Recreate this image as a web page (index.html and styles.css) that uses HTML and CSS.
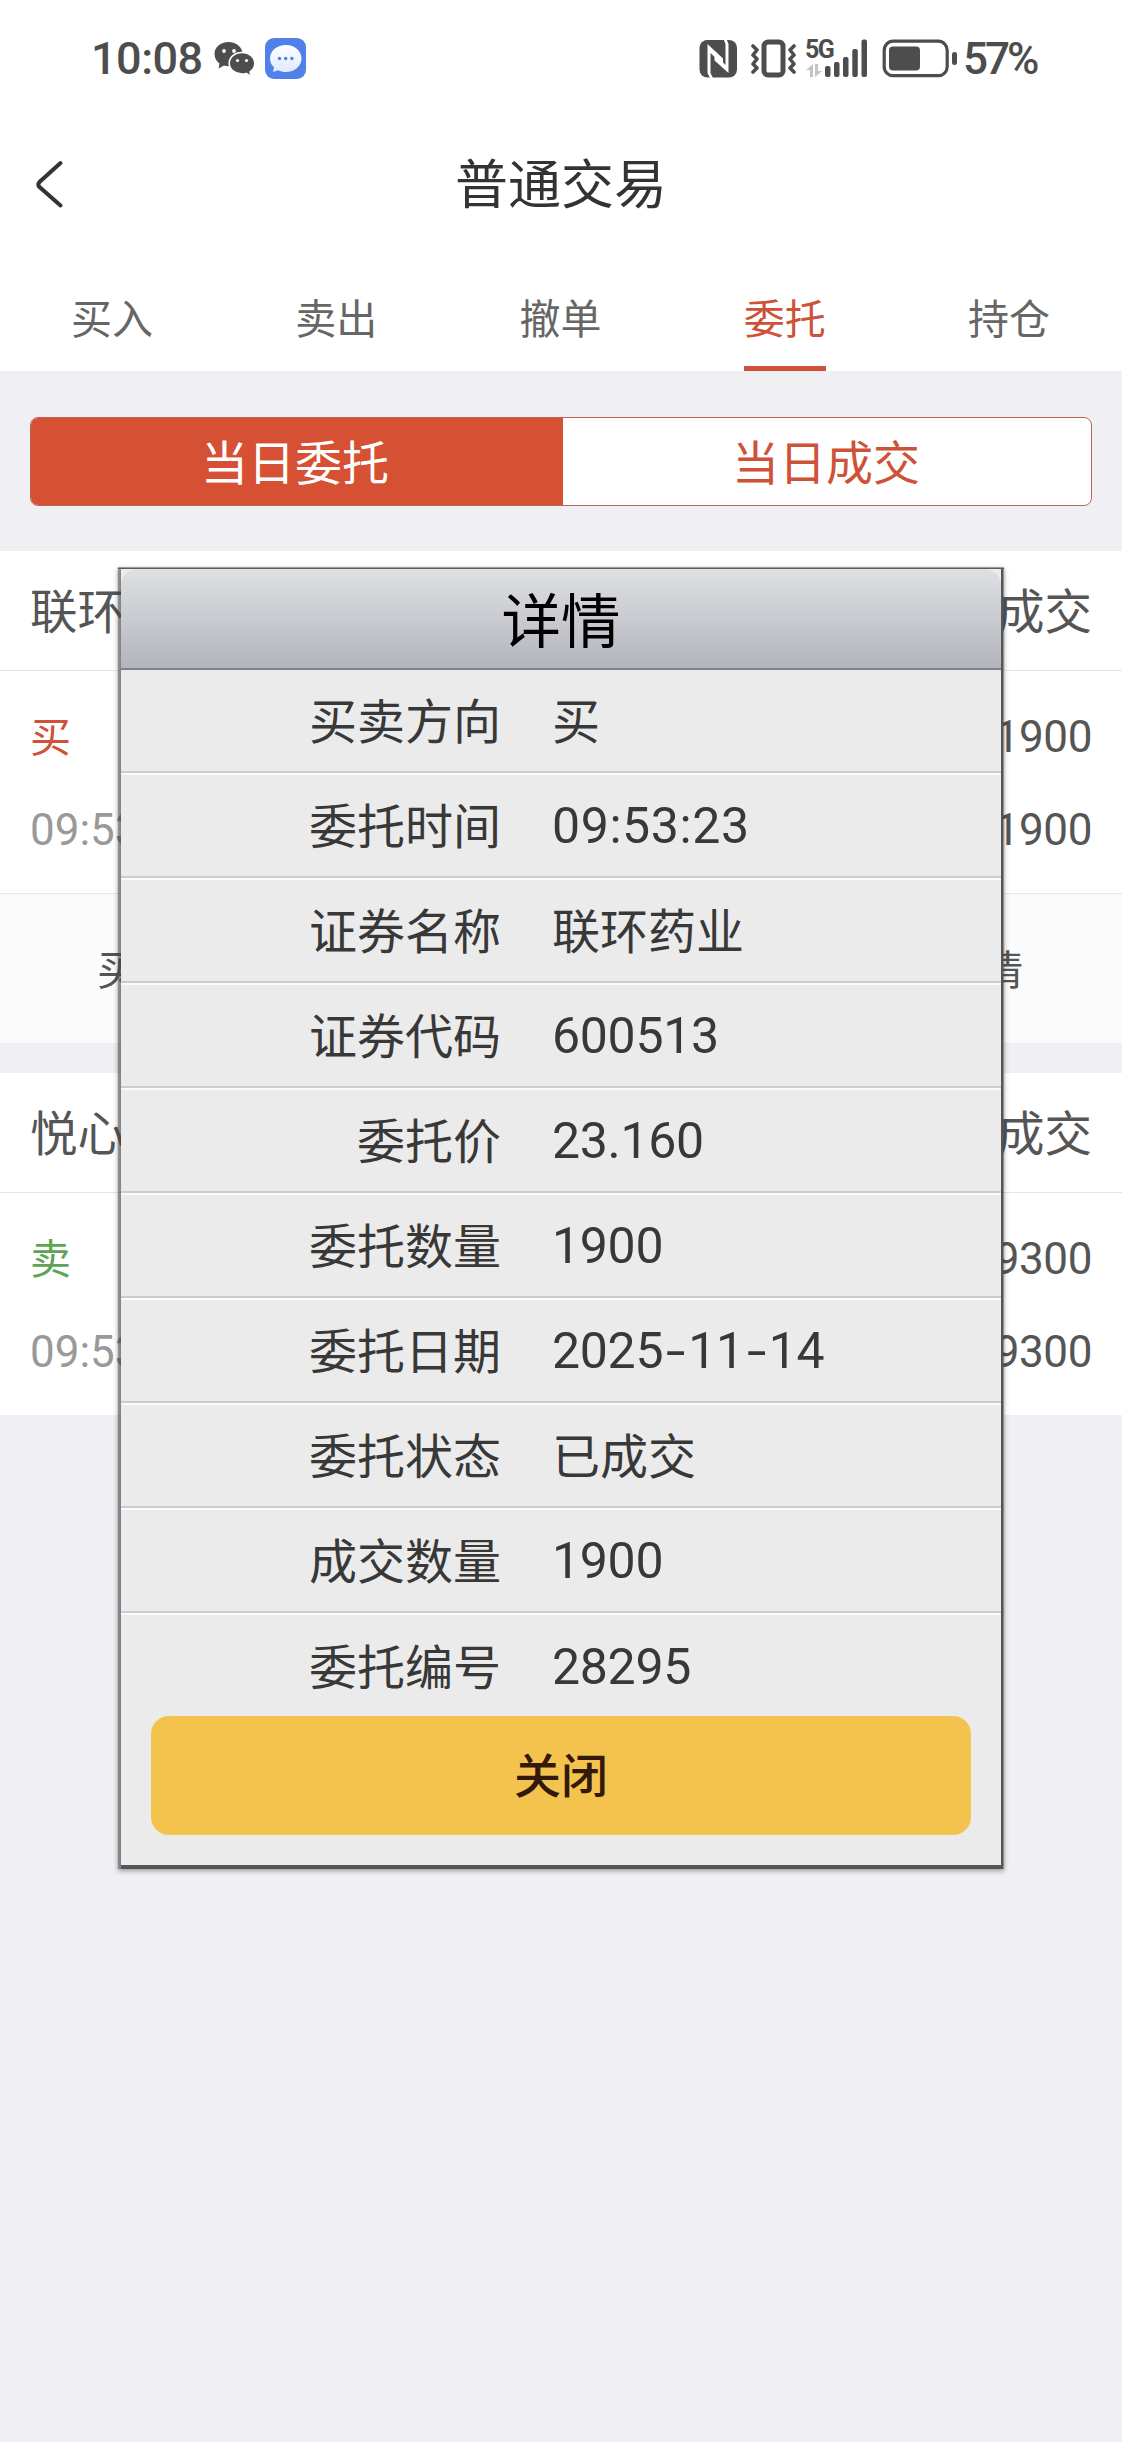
FILE: index.html
```html
<!DOCTYPE html>
<html lang="zh-CN">
<head>
<meta charset="utf-8">
<title>普通交易</title>
<link rel="stylesheet" href="styles.css">
</head>
<body>
<div class="screen">
  <header class="top">
    <div class="status">
      <div class="status-left">
        <span class="clock">10:08</span>
        <svg class="wechat" width="42" height="36" viewBox="0 0 42 36">
          <path fill="#4d4d4d" d="M14.500 1C6.500 1 0.500 6.200 0.500 13c0 4 2 7.300 5 9.500L4.500 27.500l5.500-3c1.500.5 3 .7 4.600.7C22.500 25 28.500 19.800 28.500 13S22.500 1 14.500 1z"/>
          <path fill="#4d4d4d" stroke="#fff" stroke-width="1.600" d="M28 11.500c-7.200 0-12.800 4.700-12.800 10.800S20.800 33 28 33c1.500 0 3-.2 4.300-.6l5 3-1.200-4.600c2.900-2 4.700-5 4.700-8.500C40.800 16.200 35.200 11.500 28 11.500z"/>
          <g fill="#fff"><circle cx="10" cy="10" r="1.900"/><circle cx="20" cy="10" r="1.900"/><circle cx="23.500" cy="19.500" r="1.600"/><circle cx="32.500" cy="19.500" r="1.600"/></g>
        </svg>
        <svg class="message" width="41" height="41" viewBox="0 0 41 41">
          <defs><linearGradient id="bubble" x1="0" y1="0" x2="0" y2="1"><stop offset="0" stop-color="#fff"/><stop offset="1" stop-color="#dfeaff"/></linearGradient></defs>
          <rect width="41" height="41" rx="9" fill="#5080e8"/>
          <path fill="url(#bubble)" d="M21 7C12 7 5 12.800 5 20.500c0 3.600 1.500 6.500 4 8.800L8 34l5-1.800c2.400 1.200 5 1.800 8 1.800 8.700 0 15.500-6 15.500-13.500S29.700 7 21 7z"/>
          <g fill="#5a80c8"><circle cx="14.500" cy="20.500" r="1.700"/><circle cx="20.700" cy="20.500" r="1.700"/><circle cx="26.900" cy="20.500" r="1.700"/></g>
        </svg>
      </div>
      <div class="status-right">
        <svg width="260" height="62" viewBox="0 -10 260 62">
          <rect x="0.500" y="2" width="37.500" height="37.500" rx="8" fill="#4d4d4d"/>
          <path fill="#fff" d="M8.500 6L24 20.500V27L11.500 15V35L14 40H11L8.500 35z"/>
          <path fill="#fff" d="M24.500 1H27.500L29.500 6V35L15.500 22.500V16L26.500 27V6z"/>
          <rect x="65" y="4" width="19" height="33" rx="4" fill="none" stroke="#4d4d4d" stroke-width="5"/>
          <path fill="none" stroke="#4d4d4d" stroke-width="3.600" stroke-linecap="round" stroke-linejoin="round" d="M54 8l4 4-4 5 4 4-4 5 4 4-4 4M95 8l-4 4 4 5-4 4 4 5-4 4 4 4"/>
          <text class="net" x="106" y="19.500">5G</text>
          <path fill="#c4c4c4" d="M107 32l7-6v13h-3v-7zM123 33l-7 6V26h3v7z"/>
          <g fill="#4d4d4d">
            <rect x="126" y="28" width="5.500" height="11" rx="2"/><rect x="135" y="24" width="5.500" height="15" rx="2"/><rect x="144" y="19" width="5.500" height="20" rx="2"/><rect x="153.300" y="11" width="5.500" height="28" rx="2"/><rect x="162.500" y="1.500" width="5.500" height="37.500" rx="2"/>
            <rect x="190" y="8.500" width="31" height="24" rx="4"/><rect x="253" y="14" width="5" height="13" rx="2.500"/>
          </g>
          <rect x="185.200" y="3.200" width="63" height="34.500" rx="9" fill="none" stroke="#4d4d4d" stroke-width="3.200"/>
        </svg>
        <span class="percent">57%</span>
      </div>
    </div>
    <div class="nav">
      <svg class="back" width="30" height="50" viewBox="0 0 30 50"><path d="M25.500 4L4.500 23q-2.500 2.500 0 5l21 18.500" fill="none" stroke="#333" stroke-width="4" stroke-linecap="round"/></svg>
      <h1 class="title">普通交易</h1>
    </div>
    <nav class="tabs">
      <a class="tab">买入</a><a class="tab">卖出</a><a class="tab">撤单</a><a class="tab active">委托</a><a class="tab">持仓</a>
    </nav>
  </header>

  <div class="segment">
    <div class="seg on">当日委托</div>
    <div class="seg">当日成交</div>
  </div>

  <section class="order">
    <div class="order-head"><span>联环药业</span><span>已成交</span></div>
    <div class="order-body">
      <div class="line"><span class="side buy">买</span><span class="num">1900</span></div>
      <div class="line"><span class="num time">09:53:23</span><span class="num">1900</span></div>
    </div>
    <div class="order-actions"><span>买入</span><span>详情</span></div>
  </section>

  <section class="order">
    <div class="order-head"><span>悦心健康</span><span>已成交</span></div>
    <div class="order-body">
      <div class="line"><span class="side sell">卖</span><span class="num">9300</span></div>
      <div class="line"><span class="num time">09:53:23</span><span class="num">9300</span></div>
    </div>
  </section>

  <div class="dialog">
    <h2 class="dialog-title">详情</h2>
    <dl class="details">
      <div class="row"><dt>买卖方向</dt><dd>买</dd></div>
      <div class="row"><dt>委托时间</dt><dd class="digits clocktime">09:53:23</dd></div>
      <div class="row"><dt>证券名称</dt><dd>联环药业</dd></div>
      <div class="row"><dt>证券代码</dt><dd class="digits">600513</dd></div>
      <div class="row"><dt>委托价</dt><dd class="digits">23.160</dd></div>
      <div class="row"><dt>委托数量</dt><dd class="digits">1900</dd></div>
      <div class="row"><dt>委托日期</dt><dd class="digits date">2025<i>-</i>11<i>-</i>14</dd></div>
      <div class="row"><dt>委托状态</dt><dd>已成交</dd></div>
      <div class="row"><dt>成交数量</dt><dd class="digits">1900</dd></div>
      <div class="row"><dt>委托编号</dt><dd class="digits">28295</dd></div>
    </dl>
    <button class="close">关闭</button>
  </div>
</div>
</body>
</html>
```
FILE: styles.css
```css
* { box-sizing: border-box; }
body {
  margin: 0;
  background: #efeff4;
  font-family: "Noto Sans CJK SC", sans-serif;
  color: #555;
}
.screen { position: relative; width: 1122px; height: 2442px; overflow: hidden; }

.top { height: 371px; background: #fff; display: flex; flex-direction: column; }
.status { height: 117px; display: flex; justify-content: space-between; padding-left: 91px; }
.status-left, .status-right { display: flex; align-items: center; color: #4d4d4d; }
.clock, .percent { font: 500 45px/52px Roboto, sans-serif; }
.clock { width: 123px; letter-spacing: -0.5px; }
.message { margin-left: 9px; }
.status-right { width: 423px; }
.percent { margin-left: 4px; font-size: 44px; letter-spacing: -3px; }
.net { font: 700 25px Roboto, sans-serif; letter-spacing: -1.500px; fill: #4d4d4d; }

.nav { height: 134px; display: grid; grid-template-columns: 80px 1fr 80px; align-items: center; }
.back { margin-left: 35px; }
.title { margin: 0; padding-bottom: 6px; text-align: center; font-size: 53px; line-height: 70px; font-weight: 400; color: #333; }
.tabs { flex: 1; display: grid; grid-template-columns: repeat(5, 1fr); justify-items: center; padding-right: 1px; }
.tab { width: 82px; font-size: 41px; line-height: 130px; height: 120px; text-align: center; white-space: nowrap; color: #666; }
.tab.active { color: #cd5237; border-bottom: 5px solid #cd5237; }

.segment {
  margin: 46px 30px 45px; height: 89px; display: grid; grid-template-columns: 532px 1fr;
  border: 1px solid #bd6653; border-radius: 8px; overflow: hidden; background: #fff;
}
.seg { text-align: center; font-size: 47px; line-height: 83px; color: #cd5237; padding-right: 2px; }
.seg.on { background: #d65033; color: #fff; padding-right: 4px; }

.order { background: #fff; margin-bottom: 30px; }
.order-head {
  height: 120px; padding: 0 30px 4px; display: flex; justify-content: space-between; align-items: center;
  border-bottom: 1px solid #e6e6e6; font-size: 47.500px;
}
.order-body { height: 222px; padding: 19px 30px 0; }
.line { height: 93px; display: flex; justify-content: space-between; align-items: center; }
.side { font-size: 41px; padding-bottom: 6px; }
.num { font: 400 44px/52px Roboto, sans-serif; letter-spacing: -0.4px; }
.time { color: #999; letter-spacing: 0; }
.buy { color: #cd5237; }
.sell { color: #5fa455; }
.order-actions {
  height: 150px; padding: 0 99px 4px 97px; background: #fbfbfb; border-top: 1px solid #e6e6e6;
  display: flex; justify-content: space-between; align-items: center; font-size: 41px;
}

.dialog {
  position: absolute; left: 121px; top: 569px; width: 880px; height: 1296px;
  background: #ebebeb;
  box-shadow: 0 0.500px 1px 3px #555, 0 3px 5px 3px rgba(0, 0, 0, .35);
}
.dialog-title {
  margin: 0; height: 101px; text-align: center; font-size: 59.500px; line-height: 96px; font-weight: 400; color: #000;
  background: linear-gradient(#dfe0e4, #c9cbd0 50%, #b3b5bc);
  border-bottom: 2px solid #7f8187; border-radius: 16px 16px 0 0;
}
.details { margin: 0; font-size: 48px; color: #383838; }
.row {
  height: 105px; display: grid; grid-template-columns: 380px 1fr; column-gap: 51px; align-items: center;
  border-top: 2px solid #fafafa; border-bottom: 2px solid #c7cdd2;
}
.row:first-child { height: 103px; border-top: 0; }
.row:last-child { height: 106px; border-bottom: 0; }
dt, dd { margin: 0; padding-bottom: 6px; line-height: 72px; }
dt { text-align: right; }
.digits { padding-bottom: 0; font-family: Roboto, sans-serif; font-size: 50px; letter-spacing: -0.3px; }
.clocktime { letter-spacing: 0.600px; }
.date i { display: inline-block; font-style: normal; text-align: center; width: 25px; transform: scaleX(1.4); }
.close {
  display: block; width: 820px; height: 119px; margin: -3px 0 0 30px; padding: 0 0 5px; border: 0; border-radius: 18px;
  background: #f4c34d; color: #33190a; font: 500 47px/114px "Noto Sans CJK SC", sans-serif;
}
```
